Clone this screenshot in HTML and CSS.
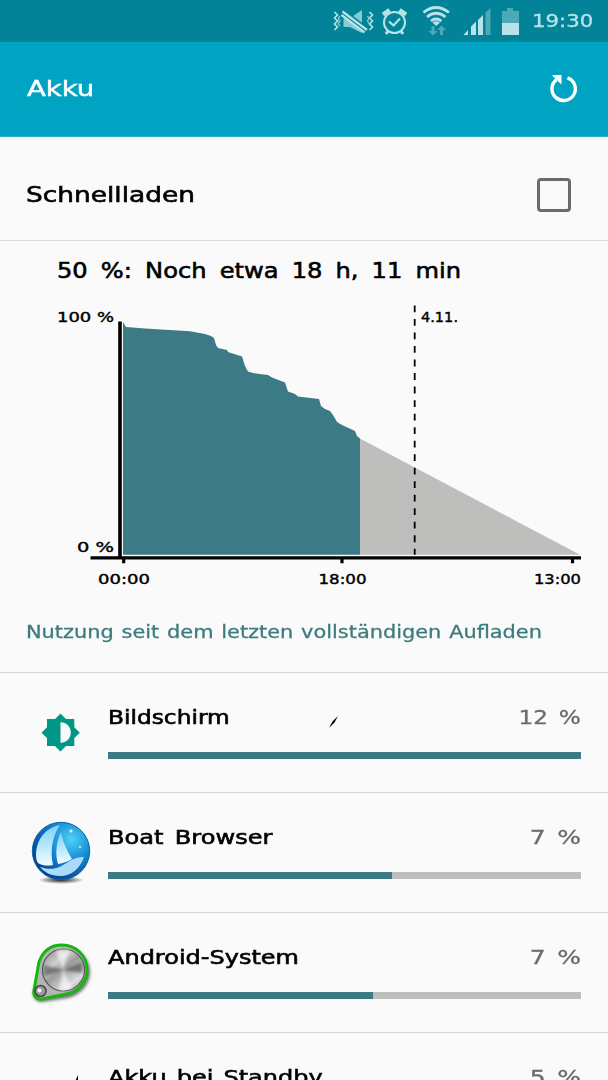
FILE: index.html
```html
<!DOCTYPE html>
<html lang="de">
<head>
  <meta charset="UTF-8">
  <meta name="viewport" content="width=device-width, initial-scale=1.0">
  <title>Akku</title>
  <link rel="stylesheet" href="styles.css">
</head>
<body>
  <div class="statusbar">
    <svg class="status-icons" width="190" height="42" viewBox="330 0 190 42">
      <path d="M343.500 18.500h6L362 10v23L350 27h-6.500z" fill="#87cad4"/>
      <path d="M341 11l26 20" stroke="#028397" stroke-width="7"/>
      <path d="M342.500 11.500l24.500 18.500M341.500 15l23 17.500" stroke="#b9e3e9" stroke-width="2.200"/>
      <g fill="none" stroke="#b9e3e9" stroke-width="1.600">
        <path d="M334.500 12l3 3-3 3 3 3-3 3 3 3-3 3M369.500 12l3 3-3 3 3 3-3 3 3 3-3 3"/>
      </g>
      <g fill="none" stroke="#87cad4" stroke-width="1.300">
        <path d="M340 16l-1.800 2.500 1.800 2.500-1.800 2.500 1.800 2.500M367.500 16l1.500 2.500-1.500 2.500 1.500 2.500"/>
      </g>
      <g fill="none" stroke="#b9e3e9" stroke-width="2">
        <circle cx="394.500" cy="22.500" r="10.500"/>
        <path d="M389 21.500l4.500 4 6.500-7" stroke-width="2.200"/>
        <path d="M383 14.500l6.500-4.500M406 14.500l-6.500-4.500" stroke-width="4"/>
        <path d="M388 31l-2 3M401 31l2 3" stroke-width="3"/>
      </g>
      <g fill="none" stroke="#b9e3e9" stroke-width="2.700">
        <path d="M423.500 12.500Q436 2.500 449 12.500M427 17Q436 9.500 445.500 17M431 21Q436 17 441.500 21"/>
      </g>
      <path d="M432.500 22.500q3.800-2.500 7.500 0L436.200 26z" fill="#b9e3e9"/>
      <path d="M431.500 26h3v5h3l-4.500 4.500-4.500-4.500h3zM440 35h3v-5h3l-4.500-4.500L437 30h3z" fill="#4ca9b7"/>
      <path d="M463.500 35l4.500-5v5zM471 35v-8.500l5-5V35zM478 35V20l5-5v20z" fill="#b9e3e9"/>
      <path d="M485.500 35V12.500l5-4.500v27z" fill="#4ca9b7"/>
      <path d="M502 23V11h5V8h6v3h6v12z" fill="#4ca9b7"/>
      <path d="M502 23h17v12h-17z" fill="#b9e3e9"/>
    </svg>
    <span class="clock">19:30</span>
  </div>

  <div class="appbar">
    <h1 class="title">Akku</h1>
    <svg class="refresh" width="30" height="30" viewBox="0 0 30 30">
      <path d="M18.500 3.800A11.700 11.700 0 1 1 7.500 5.600" fill="none" stroke="#fff" stroke-width="3.400"/>
      <path d="M3 1h9.500v9.500l-3.300-3L5 3.500z" fill="#fff"/>
    </svg>
  </div>

  <div class="setting">
    <span class="setting-name">Schnellladen</span>
    <span class="checkbox"></span>
  </div>

  <div class="usage">
    <svg class="chart" width="608" height="360" viewBox="0 241 608 360">
      <text class="chart-title" x="57" y="278" textLength="404" lengthAdjust="spacingAndGlyphs">50 %: Noch etwa 18 h, 11 min</text>
      <path fill="#3c7b85" d="M123 322L126 327L145 328.500L190 331.300L205 334L211 336L214 338L216 345L218 348L227 350L228 352L242 356.500L245 366L248 371.500L253 373L268 375L272 377.500L285 382.500L288 391.500L295 394L298 396.500L319 399L321 406L325 409L330 411L333 415L337 422L342 425L355 431L357 436L360 438.500V554.700H123z"/>
      <path fill="#bebebc" d="M360 438.500L580 554.700H360z"/>
      <path d="M414.700 305.500V554.700" stroke="#000" stroke-width="1.800" stroke-dasharray="6.800 6.720"/>
      <path d="M120 321.500V557.800" stroke="#000" stroke-width="3.600"/>
      <path d="M90.500 557.800H581" stroke="#000" stroke-width="3.300"/>
      <path d="M123.700 559V563.300M342 559V563.300M572.500 559V563.300" stroke="#000" stroke-width="3.200"/>
      <g class="chart-label">
        <text x="57" y="321.500" textLength="57" lengthAdjust="spacingAndGlyphs">100 %</text>
        <text x="77" y="551.500" textLength="37" lengthAdjust="spacingAndGlyphs">0 %</text>
        <text x="421" y="321.500" textLength="37" lengthAdjust="spacingAndGlyphs">4.11.</text>
        <text x="98" y="584" textLength="52" lengthAdjust="spacingAndGlyphs">00:00</text>
        <text x="318.500" y="584" textLength="48" lengthAdjust="spacingAndGlyphs">18:00</text>
        <text x="534" y="584" textLength="47" lengthAdjust="spacingAndGlyphs">13:00</text>
      </g>
    </svg>
    <p class="since">Nutzung seit dem letzten vollständigen Aufladen</p>
  </div>

  <ul class="apps">
    <li class="app">
      <div class="app-icon">
        <svg width="60" height="62" viewBox="0 0 60 62">
          <path fill="#009786" d="M29.500 11.500L35 17h8.300v8.300l5.500 5.500-5.500 5.300V44H35l-5.500 5.500L24 44h-8v-7.900l-5.500-5.300 5.500-5.500V17h8z"/>
          <path fill="#fafafa" d="M29.500 20.300c6 0 10.300 4.500 10.300 10.300s-4.300 10.300-10.300 10.300z"/>
        </svg>
      </div>
      <div class="app-info">
        <div class="app-line">
          <span class="app-name">Bildschirm</span>
          <svg class="mark" width="9" height="12" viewBox="0 0 9 12"><path d="M0 12L3.500 5.500 9 0 5.500 6.500z" fill="#000"/></svg>
          <span class="percent percent-long">12 %</span>
        </div>
        <div class="bar"><div class="bar-fill" style="width: 100%"></div></div>
      </div>
    </li>
    <li class="app">
      <div class="app-icon">
        <svg width="66" height="70" viewBox="0 0 66 70">
          <defs>
            <radialGradient id="sea" cx=".68" cy=".3" r=".75">
              <stop offset="0" stop-color="#4fd2f6"/>
              <stop offset=".5" stop-color="#1388d2"/>
              <stop offset="1" stop-color="#06408e"/>
            </radialGradient>
            <linearGradient id="sail" x1="0" y1="0" x2="0" y2="1">
              <stop offset="0" stop-color="#7bd3f5"/>
              <stop offset="1" stop-color="#f2fbff"/>
            </linearGradient>
            <radialGradient id="shade">
              <stop offset="0" stop-color="#222"/>
              <stop offset="1" stop-color="#222" stop-opacity="0"/>
            </radialGradient>
          </defs>
          <ellipse cx="33" cy="62" rx="23" ry="4" fill="url(#shade)"/>
          <circle cx="33" cy="33" r="28.700" fill="url(#sea)" stroke="#0a65a8" stroke-width="1"/>
          <path d="M32 7C17 10 9 21 8 35c0 4 0 7 2 10 5 3 10 3 15 2-3-14-1-28 7-40z" fill="url(#sail)"/>
          <path d="M33 14c2 11 7 20 11 27-5 3-9 4-14 5-3-10-2-21 3-32z" fill="url(#sail)"/>
          <path d="M12 49c13 4 19 1 28-5 6-4 11-5 16-5-4 12-13 19-24 19-9 0-16-4-20-9z" fill="#a9dcfa"/>
          <circle cx="43" cy="13" r="1.500" fill="#d9f8ff"/>
          <circle cx="52" cy="29" r="1.200" fill="#9ce8ff"/>
        </svg>
      </div>
      <div class="app-info">
        <div class="app-line">
          <span class="app-name name-boat">Boat Browser</span>
          <span class="percent">7 %</span>
        </div>
        <div class="bar"><div class="bar-fill" style="width: 60%"></div></div>
      </div>
    </li>
    <li class="app">
      <div class="app-icon">
        <svg width="66" height="66" viewBox="0 0 66 66">
          <defs>
            <linearGradient id="metal" x1=".1" y1="0" x2=".9" y2="1">
              <stop offset="0" stop-color="#8a8a8a"/>
              <stop offset=".3" stop-color="#d0d0d0"/>
              <stop offset=".48" stop-color="#9c9c9c"/>
              <stop offset=".8" stop-color="#dedede"/>
              <stop offset="1" stop-color="#999"/>
            </linearGradient>
            <filter id="blur" x="-20%" y="-20%" width="140%" height="140%">
              <feGaussianBlur stdDeviation="1.500"/>
            </filter>
          </defs>
          <path d="M12 24C16 12 25 5 36 5c14 0 25 11 25 25 0 12-9 23-22 26l-26 4c-6 0-9-4-9-9z" fill="#444" opacity=".75" filter="url(#blur)" transform="translate(1 2)"/>
          <path d="M11 22C15 11 23 5 34 5c14 0 25 11 25 25 0 12-9 22-21 24l-24 5c-6 1-9-4-8-9z" fill="#b4b4b4" stroke="#12b80f" stroke-width="3"/>
          <circle cx="35.500" cy="30" r="21" fill="url(#metal)" stroke="#555" stroke-width="1.200"/>
          <g filter="url(#blur)">
            <path d="M35 30L16 25a20 20 0 0 0 0 11zM35 30l19-8a20 20 0 0 1 0 11z" fill="#444" opacity=".6"/>
            <path d="M35 30L28 11a20 20 0 0 1 13 0zM35 30l-4 20a20 20 0 0 0 13-2z" fill="#fff" opacity=".6"/>
          </g>
          <circle cx="12.500" cy="51" r="5.500" fill="#999" stroke="#444" stroke-width="1.500"/>
          <circle cx="11.500" cy="50.500" r="2" fill="#fff"/>
        </svg>
      </div>
      <div class="app-info">
        <div class="app-line">
          <span class="app-name name-system">Android-System</span>
          <span class="percent">7 %</span>
        </div>
        <div class="bar"><div class="bar-fill" style="width: 56%"></div></div>
      </div>
    </li>
    <li class="app">
      <div class="app-icon">
        <svg width="60" height="60" viewBox="0 0 60 60"><path d="M47 12v18H39z" fill="#000"/></svg>
      </div>
      <div class="app-info">
        <div class="app-line">
          <span class="app-name name-standby">Akku bei Standby</span>
          <span class="percent">5 %</span>
        </div>
        <div class="bar"><div class="bar-fill" style="width: 42%"></div></div>
      </div>
    </li>
  </ul>
</body>
</html>
```

FILE: styles.css
```css
body {
  margin: 0;
  height: 1080px;
  overflow: hidden;
  background-color: #fafafa;
  color: #000;
  font-family: "DejaVu Sans", sans-serif;
}
.statusbar {
  display: flex;
  justify-content: flex-end;
  height: 42px;
  padding-right: 15px;
  background-color: #028397;
}
.clock {
  width: 61px;
  margin-left: 12px;
  color: #b9e3e9;
  font-size: 18px;
  line-height: 42px;
  transform: scaleX(1.18);
  transform-origin: left;
  -webkit-text-stroke: 0.3px;
}
.status-icons {
  flex: none;
}
.appbar {
  display: flex;
  align-items: center;
  justify-content: space-between;
  box-sizing: border-box;
  height: 95px;
  padding: 0 29px 0 27px;
  border-bottom: 1px solid #2badc5;
  background-color: #00a3c1;
}
.title {
  margin: 0;
  color: #fff;
  font-size: 22px;
  font-weight: normal;
  line-height: 30px;
  transform: scaleX(1.25);
  transform-origin: left;
  -webkit-text-stroke: 0.5px;
}
.setting {
  display: flex;
  align-items: center;
  justify-content: space-between;
  height: 103px;
  padding: 0 37px 0 26px;
  border-bottom: 1px solid #dadada;
}
.setting-name {
  padding-top: 11px;
  font-size: 22px;
  transform: scaleX(1.2);
  transform-origin: left;
  -webkit-text-stroke: 0.6px;
}
.checkbox {
  width: 28px;
  height: 28px;
  margin-top: 12px;
  border: 3px solid #6b6b6b;
  border-radius: 4px;
}
.usage {
  height: 431px;
}
.chart {
  display: block;
}
.chart-title {
  font-size: 22px;
  word-spacing: 5px;
  stroke: #000;
  stroke-width: 0.6px;
}
.chart-label {
  font-size: 14px;
  stroke: #000;
  stroke-width: 0.4px;
}
.since {
  display: inline-block;
  margin: 18px 0 0 26px;
  color: #3c7b7d;
  font-size: 18px;
  line-height: 26px;
  white-space: nowrap;
  word-spacing: 1px;
  transform: scaleX(1.16);
  transform-origin: left;
  -webkit-text-stroke: 0.3px;
}
.apps {
  margin: 0;
  padding: 0;
  list-style: none;
}
.app {
  display: flex;
  box-sizing: border-box;
  height: 120px;
  border-top: 1px solid #d6d6d6;
}
.app-icon {
  display: flex;
  align-items: center;
  justify-content: center;
  width: 94px;
  margin-left: 14px;
  padding-right: 1px;
  box-sizing: border-box;
}
.app-info {
  flex: 1;
  margin-right: 27px;
}
.app-line {
  display: flex;
  align-items: center;
  height: 79px;
  padding-top: 9px;
  box-sizing: border-box;
}
.app-name {
  font-size: 20px;
  white-space: nowrap;
  transform: scaleX(1.165);
  transform-origin: left;
  -webkit-text-stroke: 0.6px;
}
.name-boat {
  word-spacing: 3px;
  transform: scaleX(1.205);
}
.name-system {
  transform: scaleX(1.2);
}
.name-standby {
  word-spacing: 2px;
  transform: scaleX(1.2);
}
.mark {
  margin: 9px 0 0 116px;
}
.percent {
  margin-left: auto;
  color: #6b6b6b;
  font-size: 20px;
  word-spacing: 3px;
  transform: scaleX(1.25);
  transform-origin: right;
  -webkit-text-stroke: 0.3px;
}
.percent-long {
  transform: scaleX(1.16);
}
.bar {
  height: 7px;
  background-color: #bebebc;
}
.bar-fill {
  height: 100%;
  background-color: #3c7b85;
}
```
